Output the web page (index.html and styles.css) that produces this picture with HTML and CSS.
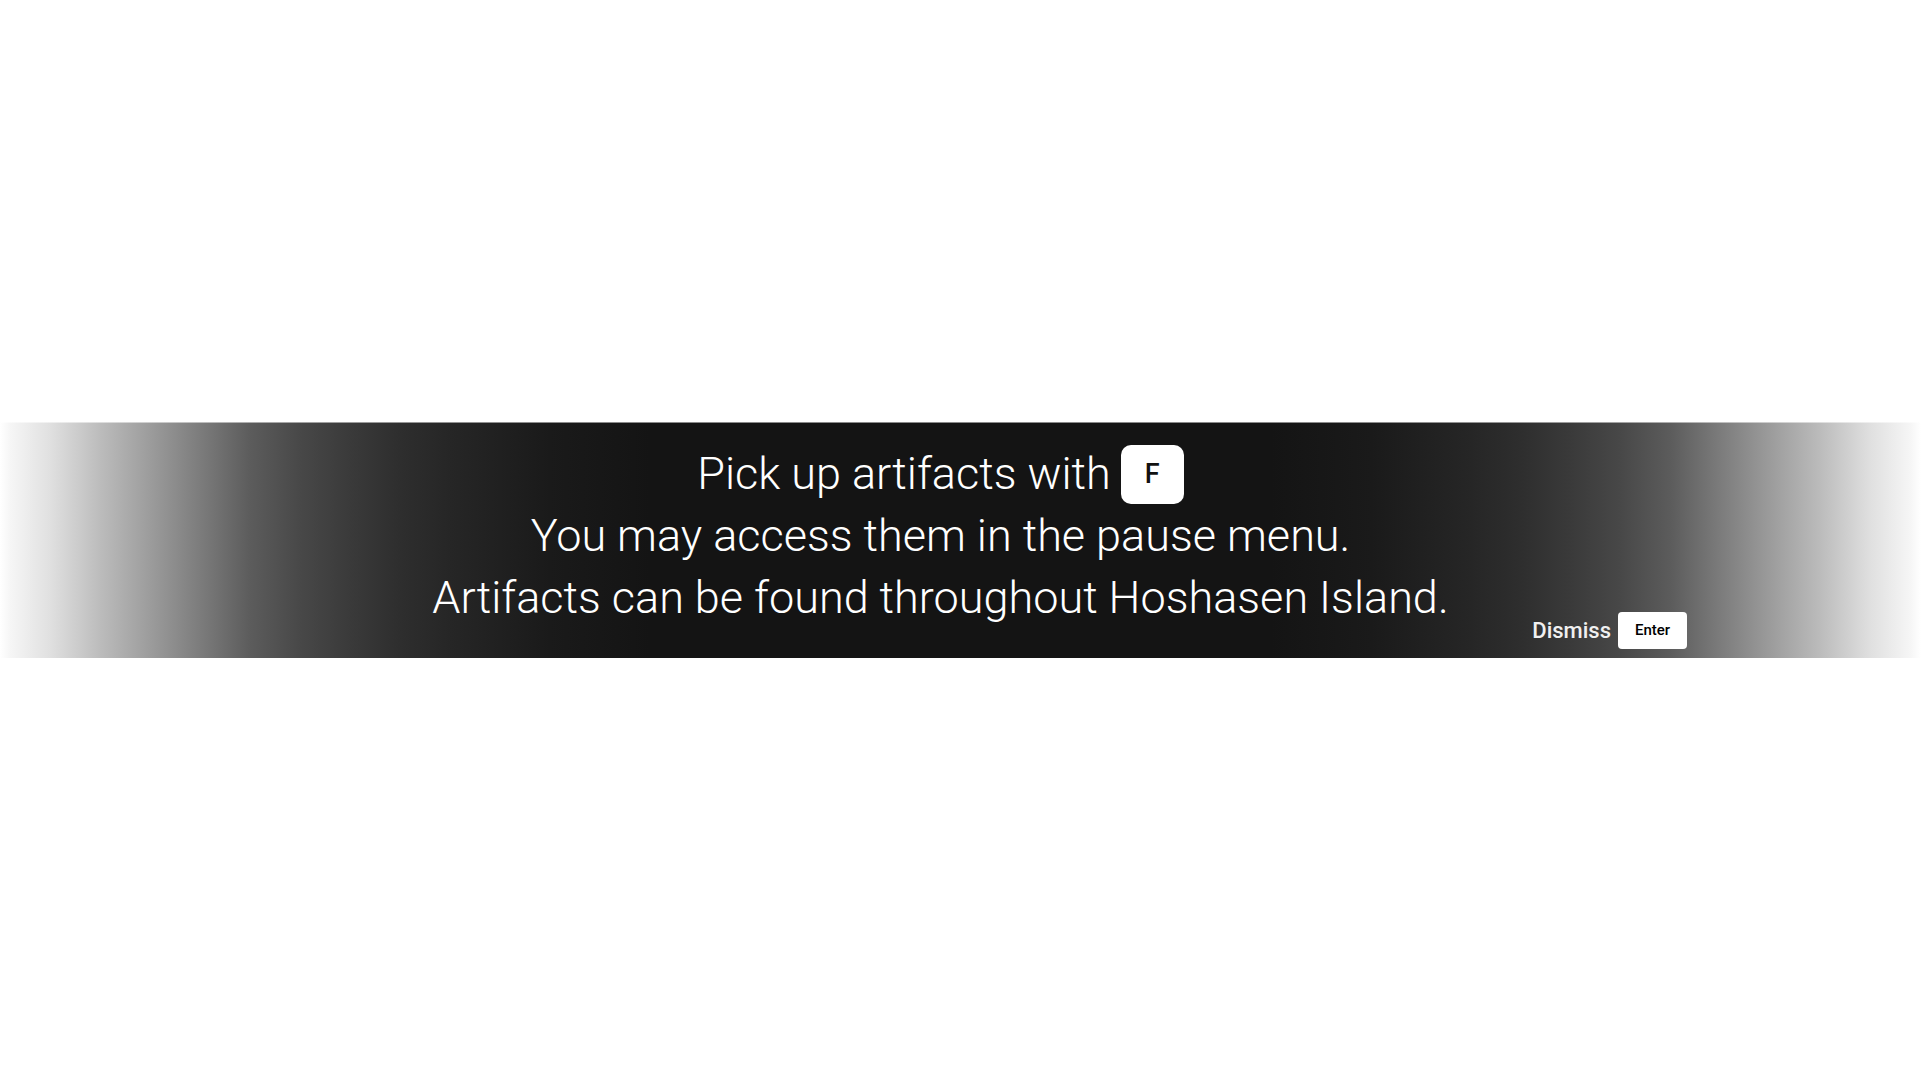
FILE: index.html
```html
<!DOCTYPE html>
<html lang="en">
<head>
<meta charset="utf-8">
<title>Artifacts</title>
<link rel="stylesheet" href="styles.css">
</head>
<body>
<div class="stage">
  <section class="banner">
    <div class="message">
      <div class="line line-first">
        <span>Pick up artifacts with</span>
        <span class="key key-f">F</span>
      </div>
      <div class="line">You may access them in the pause menu.</div>
      <div class="line">Artifacts can be found throughout Hoshasen Island.</div>
    </div>
    <div class="dismiss">
      <span class="dismiss-label">Dismiss</span>
      <span class="key key-enter">Enter</span>
    </div>
  </section>
</div>
</body>
</html>
```
FILE: styles.css
```css
html, body {
  margin: 0;
  padding: 0;
  background: #ffffff;
}

body {
  font-family: Roboto, "Liberation Sans", sans-serif;
}

.stage {
  width: 100%;
  height: 100vh;
  display: flex;
  align-items: center;
}

.banner {
  position: relative;
  width: 100%;
  height: 235px;
  box-sizing: border-box;
  padding: 20px 40px 0 0;
  background: linear-gradient(to right,
    #ffffff 0px,
    #f6f6f6 10px,
    #e0e0e0 50px,
    #bcbcbc 100px,
    #9c9c9c 150px,
    #7c7c7c 200px,
    #5c5c5c 250px,
    #484848 300px,
    #3a3a3a 350px,
    #2e2e2e 400px,
    #262626 450px,
    #1a1a1a 550px,
    #141414 650px,
    #141414 calc(100% - 650px),
    #1a1a1a calc(100% - 550px),
    #262626 calc(100% - 450px),
    #2e2e2e calc(100% - 400px),
    #3a3a3a calc(100% - 350px),
    #484848 calc(100% - 300px),
    #5c5c5c calc(100% - 250px),
    #7c7c7c calc(100% - 200px),
    #9c9c9c calc(100% - 150px),
    #bcbcbc calc(100% - 100px),
    #e0e0e0 calc(100% - 50px),
    #f6f6f6 calc(100% - 10px),
    #ffffff 100%);
}

.banner::before {
  content: "";
  position: absolute;
  left: 0;
  right: 0;
  top: -1px;
  height: 1px;
  background: inherit;
  opacity: 0.5;
}

.message {
  display: flex;
  flex-direction: column;
  align-items: center;
  color: #ffffff;
  font-weight: 300;
  font-size: 45px;
  line-height: 62px;
  white-space: nowrap;
}

.line {
  height: 62px;
}

.line-first {
  display: flex;
  align-items: center;
  gap: 10px;
}

.key {
  display: inline-flex;
  align-items: center;
  justify-content: center;
  background: #ffffff;
  color: #111111;
  box-sizing: border-box;
}

.key-f {
  width: 63px;
  height: 59px;
  border-radius: 10px;
  font-size: 27px;
  font-weight: 500;
  line-height: 1;
}

.dismiss {
  position: absolute;
  right: 234px;
  bottom: 9px;
  display: flex;
  align-items: center;
  gap: 7px;
}

.dismiss-label {
  color: #f0f0f0;
  font-size: 22px;
  font-weight: 500;
  line-height: 1;
}

.key-enter {
  width: 69px;
  height: 37px;
  border-radius: 4px;
  font-size: 15px;
  font-weight: 500;
  line-height: 1;
  color: #000000;
}
```
